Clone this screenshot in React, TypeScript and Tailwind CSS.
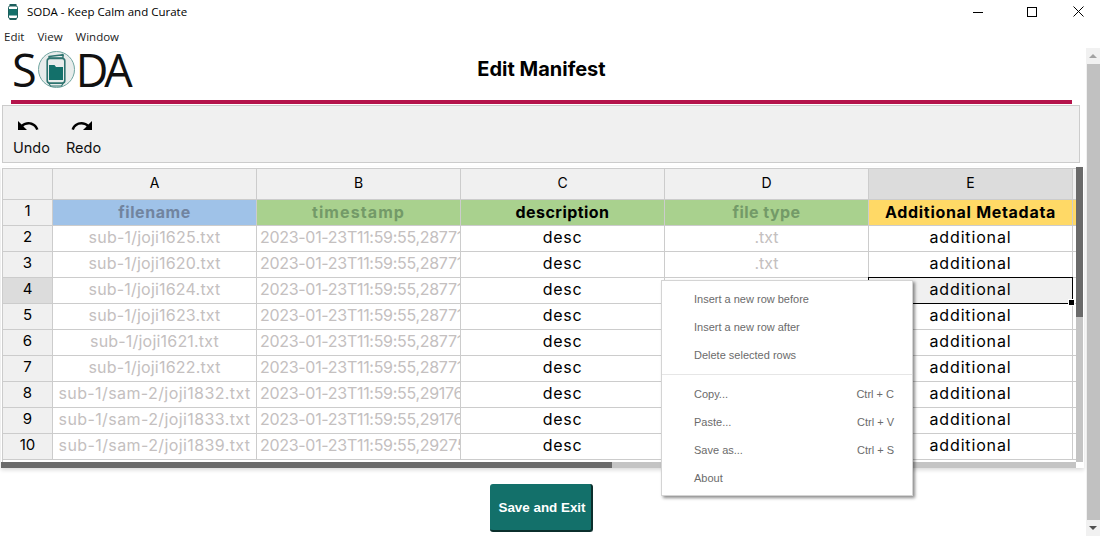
import { MdUndo, MdRedo } from 'react-icons/md'

const rows = [
  ['2', 'sub-1/joji1625.txt', '2023-01-23T11:59:55,28771'],
  ['3', 'sub-1/joji1620.txt', '2023-01-23T11:59:55,28771'],
  ['4', 'sub-1/joji1624.txt', '2023-01-23T11:59:55,28771'],
  ['5', 'sub-1/joji1623.txt', '2023-01-23T11:59:55,28771'],
  ['6', 'sub-1/joji1621.txt', '2023-01-23T11:59:55,28771'],
  ['7', 'sub-1/joji1622.txt', '2023-01-23T11:59:55,28771'],
  ['8', 'sub-1/sam-2/joji1832.txt', '2023-01-23T11:59:55,29176'],
  ['9', 'sub-1/sam-2/joji1833.txt', '2023-01-23T11:59:55,29176'],
  ['10', 'sub-1/sam-2/joji1839.txt', '2023-01-23T11:59:55,29275'],
]

const menuTop = ['Insert a new row before', 'Insert a new row after', 'Delete selected rows']
const menuBottom = [
  ['Copy...', 'Ctrl + C'],
  ['Paste...', 'Ctrl + V'],
  ['Save as...', 'Ctrl + S'],
  ['About', ''],
]

const cell = 'flex items-center justify-center overflow-hidden whitespace-nowrap border-r border-b border-[#ccc] pb-[3px]'
const font = "font-['Inter',sans-serif]"

function TitleIcon() {
  return (
    <svg viewBox="0 0 10 16" className="ml-[8px] w-[10px] h-[16px]">
      <rect x="1.5" y="0" width="7" height="2" fill="#1d5f5c" />
      <rect x="0.5" y="2" width="9" height="12.5" rx="1.5" fill="#fff" stroke="#1d5f5c" />
      <rect x="1" y="5" width="8" height="6.5" fill="#13706a" />
      <rect x="1.5" y="14" width="7" height="2" fill="#1d5f5c" />
    </svg>
  )
}

function LogoJar() {
  return (
    <svg viewBox="0 0 20 34" className="w-[20px] h-[34px]">
      <path d="M3 3.5l12-1.5 2 .5v2.5H3z" fill="#e8eceb" stroke="#2f7470" strokeWidth="1.4" />
      <circle cx="16.5" cy="2" r="1.3" fill="#2f7470" />
      <rect x="1.2" y="5.5" width="17.6" height="24.5" rx="2.5" fill="#e8eceb" stroke="#2f7470" strokeWidth="1.6" />
      <path d="M3 12h5.5l1.5 2H17v13H3z" fill="#13706a" />
      <path d="M3 30.5h14l-1.5 2.5h-11z" fill="#e8eceb" stroke="#2f7470" strokeWidth="1.2" />
    </svg>
  )
}

function Logo() {
  return (
    <div className="flex items-center h-[37px] ml-[12px] text-[45px] leading-none text-[#111] font-['Open_Sans',sans-serif]">
      <span>S</span>
      <span className="flex items-center justify-center w-[37px] h-[37px] rounded-full bg-[#e8eceb] border border-[#6fa5a0] ml-[1px] shrink-0">
        <LogoJar />
      </span>
      <span className="tracking-[-4px] ml-[1px]">DA</span>
    </div>
  )
}

function Scrollbar() {
  return (
    <div className="w-[14px] h-[488px] flex flex-col items-center bg-[#f1f1f1]">
      <div className="h-[16px] flex items-center justify-center">
        <div className="w-0 h-0 border-x-[4px] border-x-transparent border-b-[4px] border-b-[#a3a3a3]" />
      </div>
      <div className="w-full ml-[2px] flex-1 bg-[#c1c1c1]" />
      <div className="h-[16px] flex items-center justify-center">
        <div className="w-0 h-0 border-x-[4px] border-x-transparent border-t-[4px] border-t-[#505050]" />
      </div>
    </div>
  )
}

function Sheet() {
  const head = 'bg-[#f0f0f0] text-[14px] text-black'
  const gray = 'text-[#c4c0c0]'
  return (
    <div className={`relative mt-[4px] ml-[1px] w-[1083px] h-[301px] overflow-hidden text-[16px] shadow-[0_2px_4px_rgba(0,0,0,0.15)] ${font}`}>
      <div className="grid grid-cols-[50px_204px_204px_204px_204px_204px_4px] grid-rows-[31px_26px_repeat(10,26px)] mt-[1px] ml-[1px] border-l border-t border-[#ccc] w-[1076px]">
        <div className={`${cell} ${head}`} />
        {['A', 'B', 'C', 'D'].map((c) => (
          <div key={c} className={`${cell} ${head}`}>{c}</div>
        ))}
        <div className={`${cell} bg-[#dcdcdc] text-[14px] text-black`}>E</div>
        <div className={`${cell} bg-[#f0f0f0]`} />

        <div className={`${cell} ${head} text-[15px]`}>1</div>
        <div className={`${cell} !pb-[1px] bg-[#9fc2e8] font-bold text-[#71849f] tracking-[0.55px]`}>filename</div>
        <div className={`${cell} !pb-[1px] bg-[#a9d18e] font-bold text-[#739a68] tracking-[1.1px]`}>timestamp</div>
        <div className={`${cell} !pb-[1px] bg-[#a9d18e] font-bold text-black tracking-[0.45px]`}>description</div>
        <div className={`${cell} !pb-[1px] bg-[#a9d18e] font-bold text-[#739a68] tracking-[0.45px]`}>file type</div>
        <div className={`${cell} !pb-[1px] bg-[#ffd966] font-bold text-black tracking-[0.7px]`}>Additional Metadata</div>
        <div className={`${cell} bg-[#ffd966]`} />

        {rows.map(([n, file, stamp]) => (
          <div key={n} className="contents">
            <div className={`${cell} text-[15px] text-black ${n === '4' ? 'bg-[#dcdcdc]' : 'bg-[#f0f0f0]'}`}>{n}</div>
            <div className={`${cell} ${gray} ${file.length > 20 ? 'tracking-[0.4px]' : 'tracking-[0.2px]'}`}>{file}</div>
            <div className={`${cell} ${gray} !justify-start pl-[3px] tracking-[-0.3px]`}>{stamp}</div>
            <div className={`${cell} text-black tracking-[0.7px]`}>desc</div>
            <div className={`${cell} ${gray}`}>.txt</div>
            <div className={`${cell} text-black tracking-[0.85px] ${n === '4' ? 'bg-[#f0f0f0]' : ''}`}>additional</div>
            <div className={cell} />
          </div>
        ))}
      </div>
      {/* selected cell */}
      <div className="absolute left-[867px] top-[110px] w-[205px] h-[27px] border border-black" />
      <div className="absolute left-[1067px] top-[132px] w-[7px] h-[7px] bg-black border border-white" />
      {/* inner scrollbars */}
      <div className="absolute left-[1075px] top-0 w-[7px] h-[295px] bg-[#c4c4c4]">
        <div className="w-full h-[150px] bg-[#6a6a6a]" />
      </div>
      <div className="absolute left-0 top-[295px] w-[1075px] h-[6px] bg-[#c4c4c4]">
        <div className="h-full w-[611px] bg-[#6a6a6a]" />
      </div>
    </div>
  )
}

function ContextMenu() {
  return (
    <div className="absolute left-[661px] top-[280px] w-[252px] h-[216px] bg-white border border-[#d4d4d4] shadow-[2px_2px_3px_rgba(0,0,0,0.45)] font-['Liberation_Sans',sans-serif] text-[11px] text-[#6b6b6b]">
      <div className="pt-[4px] pb-[5px] border-b border-[#e6e6e6]">
        {menuTop.map((t) => (
          <div key={t} className="h-[28px] flex items-center pl-[32px]">{t}</div>
        ))}
      </div>
      <div className="pt-[5px]">
        {menuBottom.map(([t, k]) => (
          <div key={t} className="h-[28px] flex items-center justify-between pl-[32px] pr-[18px]">
            <span>{t}</span>
            <span>{k}</span>
          </div>
        ))}
      </div>
    </div>
  )
}

export default function App() {
  return (
    <div className="relative w-[1100px] h-[536px] overflow-hidden bg-white">
      <div className="h-[25px] pb-[2px] flex items-center font-['Open_Sans',sans-serif] text-[11.5px] text-black">
        <TitleIcon />
        <span className="ml-[9px]">SODA - Keep Calm and Curate</span>
        <div className="ml-auto flex items-center">
          <svg width="10" height="10" viewBox="0 0 10 10" className="mr-[44px]"><path d="M0 5.5h10" stroke="#000" /></svg>
          <div className="w-[10px] h-[10px] border border-black mr-[36px]" />
          <svg width="11" height="11" viewBox="0 0 11 11" className="mr-[16px]"><path d="M0.5 0.5l10 10M10.5 0.5l-10 10" stroke="#000" /></svg>
        </div>
      </div>
      <div className="h-[23px] flex items-center gap-[13px] pl-[4px] font-['Open_Sans',sans-serif] text-[11.5px] text-[#222]">
        <span>Edit</span>
        <span>View</span>
        <span>Window</span>
      </div>
      <div className="flex">
        <div className="w-[1086px]">
          <div className="relative h-[52px] pt-[3px]">
            <Logo />
            <div className={`absolute left-0 right-[3px] top-[6px] text-center text-[20px] font-bold text-black ${font}`}>
              Edit Manifest
            </div>
          </div>
          <div className="ml-[11px] w-[1061px] h-[4px] bg-[#b5134b]" />
          <div className={`ml-[2px] mt-[1px] w-[1078px] h-[58px] flex gap-[16px] items-start pl-[10px] pt-[8px] bg-[#f0f0f0] border border-[#ccc] text-[14.5px] text-[#111] ${font}`}>
            <div className="flex flex-col items-center">
              <MdUndo size={24} className="text-black -mb-[1px] mr-[6px]" />
              <span>Undo</span>
            </div>
            <div className="flex flex-col items-center">
              <MdRedo size={24} className="text-black -mb-[1px] mr-[3px]" />
              <span>Redo</span>
            </div>
          </div>
          <Sheet />
          <div className="flex justify-center mt-[16px]">
            <button className="w-[103px] h-[48px] mr-[3px] pt-[2px] pl-[3px] rounded-[3px] bg-[#13706a] border-r-2 border-b-2 border-[#0b2f2c] text-white text-[13.4px] font-bold font-['Liberation_Sans',sans-serif]">
              Save and Exit
            </button>
          </div>
        </div>
        <Scrollbar />
      </div>
      <ContextMenu />
    </div>
  )
}
